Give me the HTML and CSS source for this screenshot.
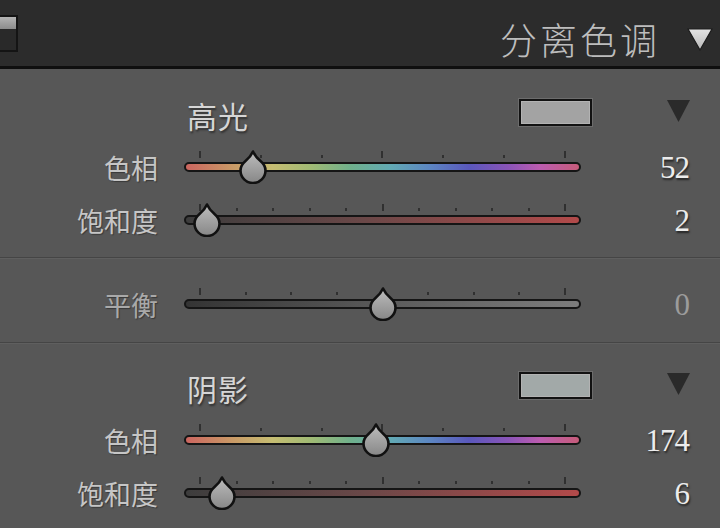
FILE: index.html
```html
<!DOCTYPE html>
<html lang="zh-CN">
<head>
    <meta charset="UTF-8">
    <title>分离色调</title>
    <link rel="stylesheet" href="styles.css">
</head>
<body>
    <!-- shared slider thumb -->
    <svg class="defs" width="0" height="0">
        <defs>
            <linearGradient id="thumbFill" x1="0" y1="0" x2="0" y2="1">
                <stop offset="0" stop-color="#bdbdbd"/>
                <stop offset="1" stop-color="#878787"/>
            </linearGradient>
            <linearGradient id="arrowFill" x1="0" y1="0" x2="0" y2="1">
                <stop offset="0" stop-color="#e4e4e4"/>
                <stop offset="1" stop-color="#b8b8b8"/>
            </linearGradient>
            <symbol id="thumb" viewBox="0 0 30 34">
                <path d="M15 1.5 C16.5 5 19 8 22.5 11 C25.8 13.8 27.5 16.8 27.5 20.5 A12.5 12.5 0 0 1 2.5 20.5 C2.5 16.8 4.2 13.8 7.5 11 C11 8 13.5 5 15 1.5 Z" fill="url(#thumbFill)" stroke="#111" stroke-width="2.6" stroke-linejoin="round"/>
            </symbol>
        </defs>
    </svg>

    <div class="panel">
        <header class="panel-header">
            <div class="panel-tab"><span class="tab-light"></span></div>
            <div class="panel-title">
                <span>分离色调</span>
                <svg class="collapse" viewBox="0 0 26 23"><polygon points="1,1 25,1 13,22" /></svg>
            </div>
        </header>

        <section class="group group-first">
            <div class="group-head">
                <h3>高光</h3>
                <span class="swatch"></span>
                <svg class="disclosure" viewBox="0 0 23 22"><polygon points="0,0 23,0 11.5,22" /></svg>
            </div>
            <div class="row">
                <label>色相</label>
                <div class="slider">
                    <div class="ticks">
                        <i class="major"></i><i></i><i></i><i class="major"></i><i></i><i></i><i class="major"></i>
                    </div>
                    <div class="track hue">
                        <svg class="thumb" style="--v: 0.1444"><use href="#thumb"/></svg>
                    </div>
                </div>
                <output class="value">52</output>
            </div>
            <div class="row">
                <label>饱和度</label>
                <div class="slider">
                    <div class="ticks">
                        <i class="major"></i><i></i><i></i><i></i><i></i><i class="major"></i><i></i><i></i><i></i><i></i><i class="major"></i>
                    </div>
                    <div class="track sat">
                        <svg class="thumb" style="--v: 0.02"><use href="#thumb"/></svg>
                    </div>
                </div>
                <output class="value">2</output>
            </div>
        </section>

        <section class="group group-balance">
            <div class="row dim">
                <label>平衡</label>
                <div class="slider">
                    <div class="ticks">
                        <i class="major"></i><i></i><i></i><i></i><i class="major"></i><i></i><i></i><i></i><i class="major"></i>
                    </div>
                    <div class="track balance">
                        <svg class="thumb" style="--v: 0.5"><use href="#thumb"/></svg>
                    </div>
                </div>
                <output class="value">0</output>
            </div>
        </section>

        <section class="group group-last">
            <div class="group-head">
                <h3>阴影</h3>
                <span class="swatch swatch-shadow"></span>
                <svg class="disclosure" viewBox="0 0 23 22"><polygon points="0,0 23,0 11.5,22" /></svg>
            </div>
            <div class="row">
                <label>色相</label>
                <div class="slider">
                    <div class="ticks">
                        <i class="major"></i><i></i><i></i><i class="major"></i><i></i><i></i><i class="major"></i>
                    </div>
                    <div class="track hue">
                        <svg class="thumb" style="--v: 0.4833"><use href="#thumb"/></svg>
                    </div>
                </div>
                <output class="value">174</output>
            </div>
            <div class="row">
                <label>饱和度</label>
                <div class="slider">
                    <div class="ticks">
                        <i class="major"></i><i></i><i></i><i></i><i></i><i class="major"></i><i></i><i></i><i></i><i></i><i class="major"></i>
                    </div>
                    <div class="track sat">
                        <svg class="thumb" style="--v: 0.06"><use href="#thumb"/></svg>
                    </div>
                </div>
                <output class="value">6</output>
            </div>
        </section>
    </div>
</body>
</html>
```

FILE: styles.css
```css
/* Panel shell */
body {
    margin: 0;
    background: #575757;
    font-family: "Noto Sans CJK SC", sans-serif;
}

.defs {
    position: absolute;
}

.panel {
    width: 720px;
    height: 528px;
    overflow: hidden;
}

/* Header bar */
.panel-header {
    height: 69px;
    box-sizing: border-box;
    background: #2c2c2c;
    border-bottom: 3px solid #0f0f0f;
    display: flex;
    justify-content: space-between;
    align-items: center;
    padding: 12px 7px 0 0;
}

.panel-tab {
    align-self: flex-start;
    margin-top: 3px;
    width: 18px;
    height: 37px;
    box-sizing: border-box;
    border: 2px solid #141414;
    border-left: none;
    background: #292929;
}

.tab-light {
    display: block;
    height: 12px;
    background: linear-gradient(#b4b4b4, #8c8c8c);
}

.panel-title {
    display: flex;
    align-items: center;
    font-size: 37px;
    font-weight: 300;
    line-height: 1;
    letter-spacing: 3px;
    color: #bdbdbd;
}

.collapse {
    width: 26px;
    height: 23px;
    margin-left: 27px;
    fill: url(#arrowFill);
    stroke: #1c1c1c;
    stroke-width: 1.2;
}

/* Groups and dividers */
.group-first {
    padding: 20px 0 10px;
}

.group-balance {
    border-top: 1px solid #454545;
    box-shadow: inset 0 1px 0 #5f5f5f;
    padding: 20px 0 11px;
}

.group-last {
    border-top: 1px solid #454545;
    box-shadow: inset 0 1px 0 #5f5f5f;
    padding: 19px 0 0;
}

.group-head {
    display: flex;
    align-items: center;
    height: 52px;
    padding: 0 30px 0 187px;
}

.group-head h3 {
    flex: 1;
    margin: 0;
    font-size: 30px;
    font-weight: normal;
    line-height: 1;
    letter-spacing: 1px;
    color: #d6d6d6;
    text-shadow: 1px 2px 2px rgba(0, 0, 0, 0.45);
}

.swatch {
    width: 73px;
    height: 27px;
    box-sizing: border-box;
    border: 2px solid #121212;
    background: #a3a3a3;
    box-shadow: 0 0 0 1px #6c6c6c, inset 0 0 0 1px #b3b3b3;
    margin-bottom: 5px;
}

.swatch-shadow {
    background: #a2a9a8;
}

.disclosure {
    width: 23px;
    height: 22px;
    margin-left: 75px;
    margin-bottom: 8px;
    fill: #2a2a2a;
}

/* Slider rows */
.row {
    display: grid;
    grid-template-columns: 158px 397px 1fr;
    column-gap: 26px;
    align-items: center;
    height: 53px;
}

.row label {
    text-align: right;
    font-size: 27px;
    line-height: 1;
    color: #c6c6c6;
    text-shadow: 1px 1px 1px rgba(0, 0, 0, 0.35);
}

.value {
    text-align: right;
    padding-right: 31px;
    font-family: "Liberation Serif", serif;
    font-size: 31px;
    line-height: 1;
    letter-spacing: -1px;
    color: #ececec;
    text-shadow: 1px 2px 2px rgba(0, 0, 0, 0.6);
}

.dim label {
    color: #a9a9a9;
}

.dim .value {
    color: #9c9c9c;
    text-shadow: none;
}

.slider {
    height: 100%;
    box-sizing: border-box;
    padding-bottom: 12px;
    display: flex;
    flex-direction: column;
    justify-content: center;
}

.ticks {
    display: flex;
    justify-content: space-between;
    align-items: flex-end;
    height: 7px;
    padding: 0 15px;
    margin-bottom: 4px;
}

.ticks i {
    width: 2px;
    height: 3px;
    background: #303030;
}

.ticks .major {
    height: 7px;
}

.track {
    position: relative;
    height: 10px;
    box-sizing: border-box;
    border: 2px solid #151515;
    border-radius: 6px;
}

.hue {
    background: linear-gradient(90deg,
        #cc6660 0%, #c99a66 12%, #c6bd72 22%, #9fba74 32%, #6fb08c 42%,
        #62aab4 52%, #5c86c2 62%, #5a58bc 72%, #8a54b8 82%, #bc5cb0 90%, #c65c7a 100%);
}

.sat {
    background: linear-gradient(90deg, #3d3d3d 0%, #6a4848 45%, #b24a4a 100%);
}

.balance {
    background: linear-gradient(90deg, #343434 0%, #5a5a5a 50%, #7c7c7c 100%);
}

/* thumb centre runs along the tick span */
.thumb {
    position: absolute;
    top: -14.5px;
    left: calc(14px + (100% - 28px) * var(--v));
    margin-left: -15px;
    width: 30px;
    height: 34px;
}
```
